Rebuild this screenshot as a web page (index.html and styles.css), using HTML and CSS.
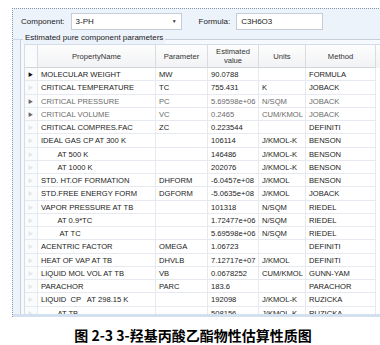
FILE: index.html
```html
<!DOCTYPE html>
<html lang="zh-CN">

<head>
    <meta charset="UTF-8">
    <title>物性估算</title>
    <link rel="stylesheet" href="styles.css">
</head>

<body>
    <div class="window">
        <div class="toolbar">
            <span class="label">Component:</span>
            <div class="combo">3-PH<span class="arrow">▼</span></div>
            <span class="label formula-label">Formula:</span>
            <div class="textbox">C3H6O3</div>
        </div>

        <div class="group">
            <div class="legend">Estimated pure component parameters</div>
            <div class="grid" id="grid">
                <div class="row head">
                    <div class="cell rh"></div>
                    <div class="cell">PropertyName</div>
                    <div class="cell">Parameter</div>
                    <div class="cell">Estimated<br>value</div>
                    <div class="cell">Units</div>
                    <div class="cell">Method</div>
                </div>
            </div>
        </div>
        <div class="scroll-edge"></div>
    </div>

    <p class="caption">图 2-3 3-羟基丙酸乙酯物性估算性质图</p>

    <script>
        const rows = [
            ["MOLECULAR WEIGHT", "MW", "90.0788", "", "FORMULA"],
            ["CRITICAL TEMPERATURE", "TC", "755.431", "K", "JOBACK"],
            ["CRITICAL PRESSURE", "PC", "5.69598e+06", "N/SQM", "JOBACK", "dim"],
            ["CRITICAL VOLUME", "VC", "0.2465", "CUM/KMOL", "JOBACK", "dim"],
            ["CRITICAL COMPRES.FAC", "ZC", "0.223544", "", "DEFINITI"],
            ["IDEAL GAS CP AT 300 K", "", "106114", "J/KMOL-K", "BENSON"],
            ["        AT 500 K", "", "146486", "J/KMOL-K", "BENSON"],
            ["        AT 1000 K", "", "202076", "J/KMOL-K", "BENSON"],
            ["STD. HT.OF FORMATION", "DHFORM", "-6.0457e+08", "J/KMOL", "BENSON"],
            ["STD.FREE ENERGY FORM", "DGFORM", "-5.0635e+08", "J/KMOL", "JOBACK"],
            ["VAPOR PRESSURE AT TB", "", "101318", "N/SQM", "RIEDEL"],
            ["        AT 0.9*TC", "", "1.72477e+06", "N/SQM", "RIEDEL"],
            ["         AT TC", "", "5.69598e+06", "N/SQM", "RIEDEL"],
            ["ACENTRIC FACTOR", "OMEGA", "1.06723", "", "DEFINITI"],
            ["HEAT OF VAP AT TB", "DHVLB", "7.12717e+07", "J/KMOL", "DEFINITI"],
            ["LIQUID MOL VOL AT TB", "VB", "0.0678252", "CUM/KMOL", "GUNN-YAM"],
            ["PARACHOR", "PARC", "183.6", "", "PARACHOR"],
            ["LIQUID  CP   AT 298.15 K", "", "192098", "J/KMOL-K", "RUZICKA"],
            ["        AT TB", "", "508156", "J/KMOL-K", "RUZICKA"]
        ];

        const grid = document.getElementById('grid');
        rows.forEach((r, i) => {
            const row = document.createElement('div');
            row.className = 'row';
            if (r[5]) row.classList.add(r[5]);
            const rh = document.createElement('div');
            rh.className = 'cell rh';
            rh.textContent = '▶';
            if (i === 0) rh.classList.add('current');
            row.appendChild(rh);
            for (let c = 0; c < 5; c++) {
                const cell = document.createElement('div');
                cell.className = 'cell';
                cell.textContent = r[c];
                row.appendChild(cell);
            }
            grid.appendChild(row);
        });
    </script>
</body>

</html>
```

FILE: styles.css
```css
body {
    margin: 0;
    width: 380px;
    height: 345px;
    overflow: hidden;
    background: #fff;
    font-family: 'Liberation Sans', Arial, sans-serif;
    color: #222;
}

.window {
    margin: 8px 0 0 12px;
    width: 380px;
    height: 308px;
    border-left: 1px dotted #8a94a6;
    border-top: 1px dotted #8a94a6;
    background: #edf3fb;
    overflow: hidden;
    position: relative;
}

/* 顶部工具条 */
.toolbar {
    height: 31px;
    box-sizing: border-box;
    display: flex;
    align-items: flex-start;
    padding: 4px 0 0 8px;
    border-bottom: 1px solid #c9d8ec;
    font-size: 8px;
    line-height: 15px;
}

.label {
    color: #222;
    padding-top: 1px;
}

.combo {
    margin-left: 6px;
    width: 101px;
    height: 15px;
    padding: 0 4px;
    background: #fff;
    border: 1px solid #c6ccd6;
    display: flex;
    justify-content: space-between;
}

.arrow {
    font-size: 5px;
    color: #333;
}

.formula-label {
    margin-left: 17px;
}

.textbox {
    margin-left: 6px;
    width: 77px;
    height: 15px;
    padding: 0 4px;
    background: #fff;
    border: 1px solid #c6ccd6;
}

/* 分组框 */
.group {
    position: relative;
    margin: 0 0 0 7px;
    padding: 4px 0 0 3px;
    border-left: 1px solid #c8ced8;
    background: #f6f9fd;
    height: 280px;
}

.group::before {
    content: '';
    position: absolute;
    left: 0;
    top: -1px;
    width: 100%;
    border-top: 1px solid #c8ced8;
}

.legend {
    position: absolute;
    left: 2px;
    top: -8px;
    padding: 0 2px;
    background: #edf3fb;
    font-size: 8px;
    line-height: 12px;
    z-index: 1;
}

/* 数据表格 */
.grid {
    background: #fff;
    border-left: 1px solid #d4dce6;
    border-top: 1px solid #d4dce6;
}

.row {
    display: grid;
    grid-template-columns: 13px 118px 52px 51px 47px 70px;
    height: 13.25px;
    font-size: 7.6px;
    line-height: 13px;
}

.row .cell {
    border-right: 1px solid #e6eaf0;
    border-bottom: 1px solid #e6eaf0;
    padding-left: 3px;
    white-space: pre;
    overflow: hidden;
}

.row.dim .cell {
    color: #6a6a6a;
}

.row.head {
    height: 23px;
    background: linear-gradient(#fdfdfd, #f1f2f4);
    line-height: 9px;
}

.row.head .cell {
    display: flex;
    align-items: center;
    justify-content: center;
    text-align: center;
    padding: 0;
    white-space: normal;
    border-right: 1px solid #d9dde3;
    border-bottom: 1px solid #d0d5dc;
    color: #333;
}

.cell.rh {
    padding-left: 3px;
    font-size: 5px;
    color: #e3e6ea;
    background: #fafbfc;
}

.cell.rh.current {
    color: #111;
}

.scroll-edge {
    position: absolute;
    left: 0;
    right: 0;
    bottom: 0;
    height: 3px;
    background: #d3e0f0;
}

/* 图题 */
.caption {
    margin: 8px 0 0;
    text-align: center;
    padding-left: 6px;
    font-family: 'Noto Sans CJK SC', sans-serif;
    font-weight: bold;
    font-size: 14px;
    line-height: 20px;
    color: #000;
}
```
